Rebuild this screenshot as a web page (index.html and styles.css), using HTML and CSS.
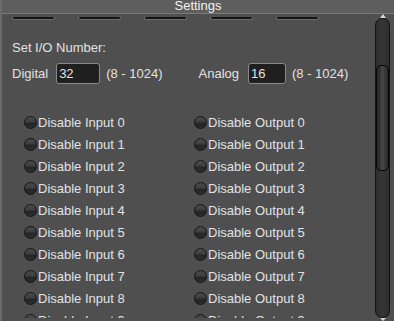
FILE: index.html
```html
<!DOCTYPE html>
<html>
<head>
<meta charset="utf-8">
<link rel="stylesheet" href="styles.css">
</head>
<body>
<div class="window">
  <div class="titlebar">Settings</div>
  <div class="main">
    <div class="content">
      <div class="tabs">
        <span class="tab"></span><span class="tab"></span><span class="tab"></span><span class="tab"></span><span class="tab"></span>
      </div>
      <div class="heading">Set I/O Number:</div>
      <div class="io-row">
        <div class="io-group">
          <span class="io-label">Digital</span>
          <input class="io-input digital" type="text" value="32">
          <span class="io-range">(8 - 1024)</span>
        </div>
        <div class="io-group analog-group">
          <span class="io-label">Analog</span>
          <input class="io-input analog" type="text" value="16">
          <span class="io-range">(8 - 1024)</span>
        </div>
      </div>
      <div class="checks">
        <label class="check"><span class="box"></span>Disable Input 0</label>
        <label class="check"><span class="box"></span>Disable Output 0</label>
        <label class="check"><span class="box"></span>Disable Input 1</label>
        <label class="check"><span class="box"></span>Disable Output 1</label>
        <label class="check"><span class="box"></span>Disable Input 2</label>
        <label class="check"><span class="box"></span>Disable Output 2</label>
        <label class="check"><span class="box"></span>Disable Input 3</label>
        <label class="check"><span class="box"></span>Disable Output 3</label>
        <label class="check"><span class="box"></span>Disable Input 4</label>
        <label class="check"><span class="box"></span>Disable Output 4</label>
        <label class="check"><span class="box"></span>Disable Input 5</label>
        <label class="check"><span class="box"></span>Disable Output 5</label>
        <label class="check"><span class="box"></span>Disable Input 6</label>
        <label class="check"><span class="box"></span>Disable Output 6</label>
        <label class="check"><span class="box"></span>Disable Input 7</label>
        <label class="check"><span class="box"></span>Disable Output 7</label>
        <label class="check"><span class="box"></span>Disable Input 8</label>
        <label class="check"><span class="box"></span>Disable Output 8</label>
        <label class="check"><span class="box"></span>Disable Input 9</label>
        <label class="check"><span class="box"></span>Disable Output 9</label>
        <label class="check"><span class="box"></span>Disable Input 10</label>
        <label class="check"><span class="box"></span>Disable Output 10</label>
      </div>
    </div>
    <div class="scrollbar">
      <span class="arrow up"></span>
      <div class="track"><div class="thumb"></div></div>
      <span class="arrow down"></span>
    </div>
  </div>
</div>
</body>
</html>
```
FILE: styles.css
```css
html, body {
  margin: 0;
  padding: 0;
  background: #4f4f4f;
  overflow: hidden;
}
.window {
  width: 394px;
  height: 321px;
  display: flex;
  flex-direction: column;
  box-sizing: border-box;
  border-left: 2px solid #6a6a6a;
  background: #4f4f4f;
  font-family: "Liberation Sans", Arial, sans-serif;
  font-size: 13px;
  color: #e2e2e2;
  overflow: hidden;
}
.titlebar {
  height: 13px;
  line-height: 12px;
  background: #5e5e5e;
  border-bottom: 1px solid #7a7a7a;
  color: #f2f2f2;
  text-align: center;
  font-size: 13px;
  flex: none;
}
.main {
  flex: 1;
  display: flex;
  min-height: 0;
}
.content {
  flex: 1;
  height: 304px;
  overflow: hidden;
}
.tabs {
  display: flex;
  gap: 25px;
  padding-left: 11px;
  margin-top: 3px;
  height: 2px;
}
.tab {
  width: 41px;
  height: 2px;
  border-radius: 2px;
  background: #161616;
  box-shadow: 0 1px 0 #6c6c6c, 1px 0 0 #777, -1px 0 0 #777;
}
.heading {
  margin-top: 21px;
  padding-left: 10px;
  line-height: 15px;
}
.io-row {
  display: flex;
  align-items: center;
  padding-left: 10px;
  margin-top: 8px;
  height: 21px;
}
.io-group {
  display: flex;
  align-items: center;
  line-height: 15px;
}
.analog-group {
  margin-left: 36px;
}
.io-input {
  box-sizing: border-box;
  height: 21px;
  margin: 0 6px 0 8px;
  padding: 0 0 0 2px;
  background: #1f1f1f;
  border: 1px solid #8a8a8a;
  border-radius: 3px;
  color: #e2e2e2;
  font-family: "Liberation Sans", Arial, sans-serif;
  font-size: 13px;
  outline: none;
}
.io-input.digital { width: 44px; }
.io-input.analog { width: 38px; margin-left: 9px; }
.checks {
  display: grid;
  grid-template-columns: 170px 170px;
  grid-auto-rows: 22px;
  padding-left: 22px;
  margin-top: 27px;
}
.check {
  display: flex;
  align-items: center;
  line-height: 15px;
  white-space: nowrap;
}
.box {
  box-sizing: border-box;
  width: 13px;
  height: 13px;
  margin-right: 1px;
  border-radius: 50%;
  border: 1px solid #141414;
  background: linear-gradient(#4c4c4c 0%, #3e3e3e 45%, #262626 55%, #2c2c2c 100%);
  flex: none;
}
.scrollbar {
  width: 15px;
  margin-right: 4px;
  display: flex;
  flex-direction: column;
  align-items: center;
  flex: none;
}
.arrow {
  width: 0;
  height: 0;
  border-left: 3px solid transparent;
  border-right: 3px solid transparent;
  flex: none;
}
.arrow.up {
  border-bottom: 4px solid #d8d8d8;
}
.arrow.down {
  border-top: 3px solid #d8d8d8;
}
.track {
  box-sizing: border-box;
  width: 15px;
  height: 300px;
  border: 1px solid #121212;
  border-radius: 7px;
  background: linear-gradient(to right, #2c2c2c, #363636 40%, #2e2e2e);
  padding-top: 46px;
  display: flex;
  justify-content: center;
}
.thumb {
  box-sizing: border-box;
  width: 13px;
  height: 106px;
  border: 1px solid #050505;
  border-radius: 5px;
  background: linear-gradient(to right, #2a2a2a, #2f2f2f 25%, #474747 45%, #3e3e3e 65%, #262626);
}
```
